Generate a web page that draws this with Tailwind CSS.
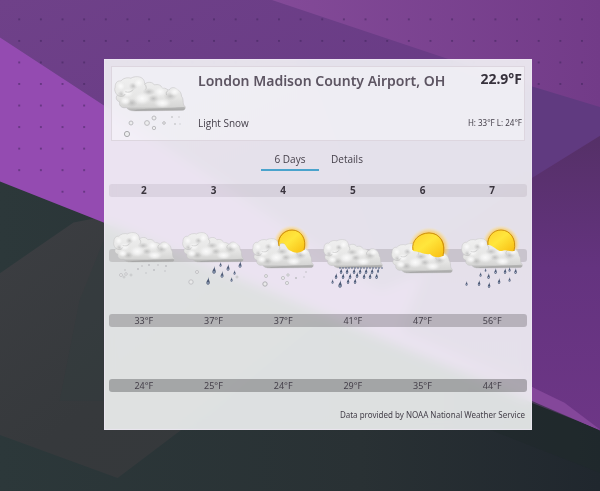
<!DOCTYPE html>
<html lang="en">
<head>
<meta charset="utf-8">
<meta name="viewport" content="width=device-width, initial-scale=1">
<title>Weather</title>
<script src="https://cdn.jsdelivr.net/npm/@tailwindcss/browser@4"></script>
</head>
<body class="relative min-h-screen bg-[#2b3437] font-['Noto_Sans','Open_Sans',sans-serif] text-[#45404a]">

<!-- Wallpaper -->
<svg class="absolute inset-0 h-full w-full" viewBox="0 0 600 491" preserveAspectRatio="xMidYMid slice" aria-hidden="true">
  <defs>
    <linearGradient id="wTop" x1="0" y1="0" x2="1" y2="1"><stop offset="0" stop-color="#6f4189"/><stop offset="1" stop-color="#633682"/></linearGradient>
    <linearGradient id="wRight" x1="0" y1="0" x2="1" y2="0"><stop offset="0" stop-color="#834a98"/><stop offset="1" stop-color="#723b88"/></linearGradient>
    <linearGradient id="wDeep" x1="0" y1="0" x2="0" y2="1"><stop offset="0" stop-color="#553067"/><stop offset=".45" stop-color="#64337f"/><stop offset="1" stop-color="#6d3686"/></linearGradient>
    <linearGradient id="wGrey" x1="0" y1="0" x2="1" y2="1"><stop offset="0" stop-color="#3c3e42"/><stop offset=".5" stop-color="#36393c"/><stop offset="1" stop-color="#35393b"/></linearGradient>
    <linearGradient id="wBase" x1="0" y1="0" x2="1" y2="0"><stop offset="0" stop-color="#2c383a"/><stop offset=".6" stop-color="#293134"/><stop offset="1" stop-color="#20272e"/></linearGradient>
    <pattern id="wDots" x="9" y="8.600" width="21.600" height="21.500" patternUnits="userSpaceOnUse"><circle cx="10.800" cy="10.700" r=".9" fill="#40235c"/></pattern>
  </defs>
  <rect width="600" height="491" fill="url(#wBase)"/>
  <path d="M0 273 74 222 110 215 330 310 180 430 118 477 0 434z" fill="url(#wGrey)"/>
  <path d="M104 240 104 400 60 400 80 300z" fill="#313b3d" opacity=".5"/>
  <path d="M0 181 0 0H600V430L531 400 104 222z" fill="#944bb1"/>
  <path d="M0 0H600V200L380 290 104 105 0 37z" fill="url(#wTop)"/>
  <path d="M300 59H600V135L531 178 380 270z" fill="#603a80"/>
  <path d="M272 0H600V107L531 86 445 58z" fill="url(#wRight)"/>
  <path d="M600 135V430L531 386 400 330 440 235 531 178z" fill="url(#wDeep)"/>
  <path d="M440 355 531 386 564 402 600 429 531 402z" fill="#84479a"/>
  <path d="M490 429 531 400 600 430V472z" fill="#1f292c" opacity=".6"/>
  <path d="M9 8H600V105L300 52 106 100V204L9 180z" fill="url(#wDots)" opacity=".8"/>
  <rect y="490" width="600" height="1" fill="#20262a"/>
</svg>

<!-- Shared weather artwork -->
<svg class="absolute h-0 w-0" aria-hidden="true">
  <defs>
    <linearGradient id="cBody" x1="0" y1="0" x2="0" y2="1"><stop offset="0" stop-color="#f0f0f0"/><stop offset=".6" stop-color="#e6e6e5"/><stop offset=".88" stop-color="#d6d6d5"/><stop offset="1" stop-color="#a8a8a8"/></linearGradient>
    <radialGradient id="cPuff"><stop offset="0" stop-color="#fbfbfb"/><stop offset=".5" stop-color="#f3f3f3" stop-opacity=".8"/><stop offset="1" stop-color="#e8e8e8" stop-opacity="0"/></radialGradient>
    <radialGradient id="cShade"><stop offset="0" stop-color="#a8a8a8" stop-opacity=".6"/><stop offset="1" stop-color="#b8b8b8" stop-opacity="0"/></radialGradient>
    <radialGradient id="sGlow"><stop offset=".6" stop-color="#ffb31a" stop-opacity=".9"/><stop offset=".82" stop-color="#ffcf55" stop-opacity=".5"/><stop offset="1" stop-color="#ffe9a8" stop-opacity="0"/></radialGradient>
    <linearGradient id="sDisc" x1="0" y1="0" x2="1" y2="1"><stop offset="0" stop-color="#ffd02e"/><stop offset=".45" stop-color="#ffe63c"/><stop offset="1" stop-color="#f9bd10"/></linearGradient>
    <symbol id="cloud" viewBox="0 0 64 32">
      <path d="M1 10C1 6 3 4 6 4.500 8 2 12 1 15 2 18 0 24 0 26 3 27 4 27 6 27.500 7 30 5 34 5 36 8 39 7 42 8 43 11 46 10 48 13 49 12.500 50 10 54 9.500 56 12 59 13 60 16 60 18 62 20 61 23 62 26 64 27 64 30 61 30.500L18 31C15 31 12 30 11 28 8 29 4 27 5 23 2 22 1 19 3 17 1 15 0 12 1 10z" fill="url(#cBody)" stroke="#c2c2c2" stroke-width=".5"/>
      <ellipse cx="17" cy="9" rx="4" ry="3.500" fill="url(#cShade)"/>
      <ellipse cx="7" cy="16" rx="4" ry="3" fill="url(#cShade)"/>
      <ellipse cx="31" cy="14" rx="6" ry="3.500" fill="url(#cShade)"/>
      <ellipse cx="35" cy="20" rx="5" ry="3.500" fill="url(#cShade)"/>
      <ellipse cx="50" cy="18" rx="6" ry="4" fill="url(#cShade)"/>
      <ellipse cx="16" cy="24" rx="5" ry="4" fill="url(#cShade)"/>
      <ellipse cx="22" cy="6" rx="5" ry="5" fill="url(#cPuff)"/>
      <ellipse cx="6" cy="9" rx="4.500" ry="4.500" fill="url(#cPuff)"/>
      <ellipse cx="12" cy="15" rx="6" ry="4.500" fill="url(#cPuff)"/>
      <ellipse cx="25" cy="20" rx="8" ry="6" fill="url(#cPuff)"/>
      <ellipse cx="41" cy="14" rx="6" ry="5" fill="url(#cPuff)"/>
      <ellipse cx="54" cy="14" rx="5" ry="4" fill="url(#cPuff)"/>
      <ellipse cx="43" cy="24" rx="8" ry="4.500" fill="url(#cPuff)"/>
      <ellipse cx="10" cy="22" rx="5" ry="4" fill="url(#cPuff)"/>
      <path d="M20 30C30 28.500 52 28.500 62 27.500 64 28 63 30.500 61 30.500L18 31z" fill="#9e9e9e" opacity=".5"/>
      <path d="M10 14C13 15 16 14 17 12M3 17C6 19 9 18 10 16M27 7C29 9 29 11 28 12M48 13C46 14 46 16 47 17" fill="none" stroke="#bcbcbc" stroke-width=".6"/>
    </symbol>
    <symbol id="sun" viewBox="0 0 40 40">
      <circle cx="20" cy="20" r="20" fill="url(#sGlow)"/>
      <circle cx="20" cy="20" r="14" fill="url(#sDisc)" stroke="#cf920e" stroke-width="1"/>
    </symbol>
    <symbol id="drop" viewBox="0 0 4 8">
      <path d="M2.500 0C2.500 3 4 4 3.700 6 3.400 8.200.6 8.200.4 6 .3 4 2.200 3 2.500 0z" fill="#4c5975"/>
      <circle cx="2" cy="6" r=".8" fill="#b9c6dd"/>
    </symbol>
  </defs>
</svg>

<main class="relative pt-[59px] pr-[68px] pb-[62px] pl-[104px]">
  <section class="border border-[#f2e8f6]/60 bg-[#f8fafa]/87 px-1 pt-[6px] pb-2 backdrop-blur-[6px]" aria-label="Weather report">

    <header class="mx-[2px] flex h-[75px] border border-[#ddd6df] bg-white/40 pr-[2px]">
      <svg class="h-[73px] w-[76px] shrink-0" viewBox="0 0 76 73" role="img" aria-label="Light Snow">
        <use href="#cloud" x="0" y="9" width="76" height="36"/>
        <g fill="#ededee" stroke="#bcbcbf" stroke-width="1">
          <circle cx="15" cy="67" r="2.600" stroke="#a9a9ac"/><circle cx="19" cy="56" r="2"/><circle cx="35" cy="56" r="2.400"/><circle cx="42" cy="51" r="2"/><circle cx="42" cy="61" r="1.700"/><circle cx="52" cy="56" r="1.300"/>
        </g>
        <g fill="#cbcbce"><circle cx="60" cy="50" r="1"/><circle cx="63" cy="57" r="1"/><circle cx="67" cy="50" r=".8"/><circle cx="68" cy="57" r=".7"/></g>
      </svg>
      <div class="ml-[10px] flex grow flex-col justify-between pt-1 pb-[9px]">
        <div class="flex justify-between whitespace-nowrap">
          <h1 class="text-[14px] leading-5 font-semibold text-[#5d5562]">London Madison County Airport, OH</h1>
          <p class="text-[14px] leading-4 font-bold text-[#37323c]">22.9°F</p>
        </div>
        <div class="flex items-center justify-between leading-4">
          <p class="font-['Open_Sans','Noto_Sans',sans-serif] text-[10px]">Light Snow</p>
          <p class="text-[8px]">H: 33°F L: 24°F</p>
        </div>
      </div>
    </header>

    <nav class="mt-2 flex justify-center font-['Open_Sans','Noto_Sans',sans-serif] text-[10px] leading-5" aria-label="Forecast views">
      <button type="button" class="w-[58px] border-b-2 border-[#4aa3cc]" aria-current="true">6 Days</button>
      <button type="button" class="w-[56px] border-b-2 border-transparent">Details</button>
    </nav>

    <table class="mt-[13px] block leading-[13px]">
      <tbody class="flex flex-col gap-[52px]">
        <tr class="grid h-[13px] grid-cols-6 rounded-[3px] bg-[#5a4a5c]/11 text-center text-[10px] text-[#3a353e]">
          <th>2</th><th>3</th><th>4</th><th>5</th><th>6</th><th>7</th>
        </tr>
        <tr class="grid h-[13px] grid-cols-6 rounded-[3px] bg-[#4d4650]/18">
          <td class="flex h-[13px] items-center justify-center">
            <svg class="h-16 w-16 shrink-0" viewBox="0 0 64 64" role="img" aria-label="Light snow">
              <use href="#cloud" y="8" width="64" height="31"/>
              <g fill="#e9e9ea" stroke="#bebec2" stroke-width=".8"><circle cx="9" cy="51" r="1.500"/><circle cx="14" cy="50" r="1.300"/><circle cx="12" cy="53" r="1"/><circle cx="19" cy="51" r="1"/></g>
              <g fill="#bdbdc1"><circle cx="13" cy="46" r=".8"/><circle cx="26" cy="45" r=".9"/><circle cx="30" cy="42" r=".8"/><circle cx="34" cy="49" r=".7"/><circle cx="37" cy="41" r=".9"/><circle cx="42" cy="46" r=".9"/><circle cx="46" cy="41" r=".8"/><circle cx="54" cy="42" r=".9"/><circle cx="53" cy="47" r=".7"/></g>
            </svg>
          </td>
          <td class="flex h-[13px] items-center justify-center">
            <svg class="h-16 w-16 shrink-0" viewBox="0 0 64 64" role="img" aria-label="Rain and snow">
              <use href="#cloud" y="8" width="64" height="31"/>
              <g fill="#e9e9ea" stroke="#bebec2" stroke-width=".9"><circle cx="10" cy="58" r="2.200"/><circle cx="16" cy="48" r="1.500"/><circle cx="56" cy="53" r="1"/></g>
              <use href="#drop" x="31" y="42" width="4" height="8"/><use href="#drop" x="38" y="38" width="3" height="5"/><use href="#drop" x="45" y="40" width="4" height="7"/><use href="#drop" x="57" y="37" width="4" height="7"/><use href="#drop" x="39" y="47" width="4" height="7"/><use href="#drop" x="52" y="46" width="3" height="5"/><use href="#drop" x="49" y="53" width="3" height="5"/><use href="#drop" x="25" y="53" width="4" height="8"/>
            </svg>
          </td>
          <td class="flex h-[13px] items-center justify-center">
            <svg class="h-16 w-16 shrink-0" viewBox="0 0 64 64" role="img" aria-label="Partly sunny with snow">
              <use href="#sun" x="22" y="1" width="37" height="37"/>
              <use href="#cloud" y="14" width="64" height="31"/>
              <path d="M28 23 30 18C33 17 35 23 38 26 43 29 48 30 53 26L54 22C55 16 51 8 46 7 38 4 28 10 28 19z" fill="url(#sDisc)"/>
              <path d="M28 22C26 13 33 6 41 6 50 6 56 15 53 26" fill="none" stroke="#cf920e" stroke-width="1"/>
              <g fill="#e9e9ea" stroke="#bebec2" stroke-width=".9"><circle cx="14" cy="60" r="2.200" stroke="#aaaaae"/><circle cx="15" cy="52" r="1.500"/><circle cx="32" cy="54" r="1.600"/><circle cx="36" cy="59" r="1.600"/><circle cx="37" cy="51" r="1.200"/></g>
              <g fill="#bdbdc1"><circle cx="45" cy="54" r="1"/><circle cx="55" cy="48" r=".8"/><circle cx="53" cy="53" r=".7"/></g>
            </svg>
          </td>
          <td class="flex h-[13px] items-center justify-center">
            <svg class="h-16 w-16 shrink-0" viewBox="0 0 64 64" role="img" aria-label="Heavy rain">
              <use href="#cloud" y="15" width="64" height="30"/>
              <path d="M18 44H63" stroke="#5d6887" stroke-width="1" stroke-dasharray="2 1"/>
              <g>
                <use href="#drop" x="18" y="44" width="4" height="6"/><use href="#drop" x="24" y="44" width="4" height="6"/><use href="#drop" x="31" y="44" width="4" height="6"/><use href="#drop" x="37" y="44" width="4" height="6"/><use href="#drop" x="43" y="44" width="4" height="6"/><use href="#drop" x="49" y="44" width="4" height="6"/><use href="#drop" x="55" y="44" width="4" height="5"/>
                <use href="#drop" x="13" y="49" width="4" height="6"/><use href="#drop" x="20" y="49" width="4" height="6"/><use href="#drop" x="27" y="49" width="4" height="6"/><use href="#drop" x="34" y="48" width="4" height="6"/><use href="#drop" x="41" y="49" width="4" height="6"/><use href="#drop" x="47" y="49" width="4" height="6"/><use href="#drop" x="54" y="49" width="3" height="6"/>
                <use href="#drop" x="10" y="55" width="3" height="5"/><use href="#drop" x="17" y="56" width="4" height="8"/><use href="#drop" x="25" y="54" width="4" height="6"/><use href="#drop" x="32" y="54" width="4" height="6"/>
              </g>
            </svg>
          </td>
          <td class="flex h-[13px] items-center justify-center">
            <svg class="h-16 w-16 shrink-0" viewBox="0 0 64 64" role="img" aria-label="Partly sunny">
              <use href="#sun" x="18" y="3" width="42" height="42"/>
              <use href="#cloud" y="19" width="64" height="31"/>
              <path d="M23 27C21 17 29 9 39 9 50 9 56 19 53 32 48 34 44 34 40 30 35 31 28 27 23 27z" fill="url(#sDisc)"/>
              <path d="M23 26C21 17 29 9 39 9 50 9 56 19 53 32" fill="none" stroke="#cf920e" stroke-width="1"/>
            </svg>
          </td>
          <td class="flex h-[13px] items-center justify-center">
            <svg class="h-16 w-16 shrink-0" viewBox="0 0 64 64" role="img" aria-label="Partly sunny with showers">
              <use href="#sun" x="22" y="1" width="38" height="38"/>
              <use href="#cloud" y="14" width="64" height="31"/>
              <path d="M28 21C27 13 33 6 41 6 50 6 57 15 54 27 49 28 46 25 42 27 38 28 32 20 28 21z" fill="url(#sDisc)"/>
              <path d="M28 21C27 13 33 6 41 6 50 6 57 15 54 27" fill="none" stroke="#cf920e" stroke-width="1"/>
              <use href="#drop" x="24" y="44" width="3" height="4"/><use href="#drop" x="34" y="44" width="3" height="6"/><use href="#drop" x="43" y="44" width="4" height="6"/><use href="#drop" x="48" y="43" width="3" height="5"/><use href="#drop" x="54" y="44" width="3" height="6"/>
              <use href="#drop" x="19" y="48" width="3" height="5"/><use href="#drop" x="27" y="49" width="3" height="6"/><use href="#drop" x="37" y="54" width="4" height="6"/><use href="#drop" x="48" y="53" width="3" height="5"/><use href="#drop" x="17" y="56" width="4" height="6"/><use href="#drop" x="5" y="57" width="3" height="5"/><use href="#drop" x="27" y="58" width="4" height="6"/>
            </svg>
          </td>
        </tr>
        <tr class="grid h-[13px] grid-cols-6 rounded-[3px] bg-[#3c3840]/28 text-center text-[9px]">
          <td>33°F</td><td>37°F</td><td>37°F</td><td>41°F</td><td>47°F</td><td>56°F</td>
        </tr>
        <tr class="grid h-[13px] grid-cols-6 rounded-[3px] bg-[#343638]/34 text-center text-[9px]">
          <td>24°F</td><td>25°F</td><td>24°F</td><td>29°F</td><td>35°F</td><td>44°F</td>
        </tr>
      </tbody>
    </table>

    <footer class="mt-[17px] pr-[2px] text-right text-[8px] leading-3">Data provided by NOAA National Weather Service</footer>
  </section>
</main>
</body>
</html>
